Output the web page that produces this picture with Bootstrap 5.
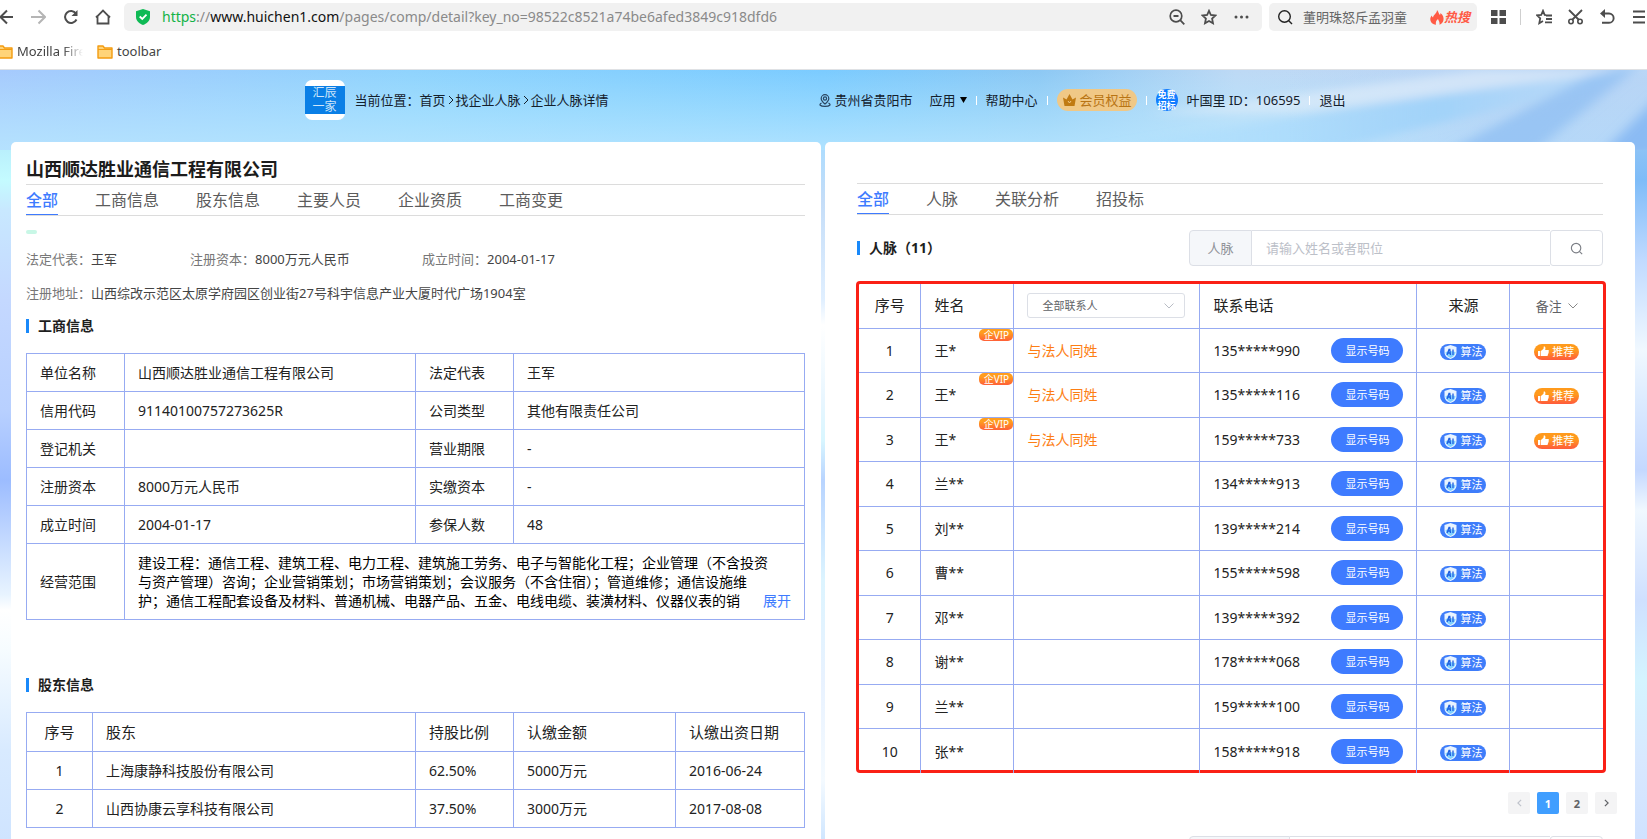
<!DOCTYPE html>
<html lang="zh-CN">
<head>
<meta charset="utf-8">
<meta name="viewport" content="width=device-width, initial-scale=1">
<title>企业人脉详情</title>
<link rel="stylesheet" href="https://cdn.jsdelivr.net/npm/bootstrap@5.3.0/dist/css/bootstrap.min.css">
<style>
:root{--line:#97abf2;--blue:#3e7bff;--bar:#1989fa}
body{font-family:"Noto Sans","Noto Sans CJK SC",sans-serif;font-size:14px;line-height:19px;color:#222;background:#fff}
a{color:inherit;text-decoration:none}
svg{display:block;flex:none}
button{font-family:inherit}
/* browser chrome */
.toolrow{height:34px}
.ico-btn{border:0;background:none;padding:0;color:#4d4d4d}
.addr{height:28px;background:#f1f1f1;border-radius:5px;margin-left:13px;padding:0 13px 0 12px}
.url{font-size:14px;line-height:20px;color:#8a8a8a;white-space:nowrap;overflow:hidden}
.url b{font-weight:400;color:#111}.url i{font-style:normal;color:#12b347}
.find{width:208px;height:28px;background:#f1f1f1;border-radius:5px;margin-left:7px;padding:0 7px 0 8px}
.find input{width:112px;font-size:13px;border:0;background:none;padding:0;color:#555;outline:0}
.find input::placeholder{color:#666;opacity:1}
.hot{font-size:13px;font-weight:700;font-style:italic;color:#ff5a45;white-space:nowrap}
.marks{height:36px;font-size:13px;color:#444;border-bottom:1px solid #dfe1e4}
.fade-text{width:66px;overflow:hidden;white-space:nowrap;-webkit-mask-image:linear-gradient(90deg,#000 70%,transparent)}
/* page */
.site{
 background:
 linear-gradient(180deg,#a8cffd 0,#b6ecfb 70px,#c4fbff 110px,#c8e8ff 140px,#c4d8ff 230px,#b8d0ff 340px,#9cbcff 410px,#e8f4ff 525px,#fff 540px,#f6fcff 580px,#d8eaff 680px,#cfe4ff 770px) left top/411px 100% no-repeat,
 linear-gradient(180deg,#8fc4f5 72px,#7ebcf8 110px,#c0daff 190px,#f0f8ff 280px,#dcebff 330px,#c4d8ff 400px,#f0f8ff 440px,#cfe0ff 530px,#d4f4ff 610px,#d8e8ff 690px,#d0e2ff 770px) right top/400px 100% no-repeat,
 linear-gradient(180deg,#aadcff 72px,#c4ddf8 130px,#e0efff 230px,#fff 255px,#e8f6ff 330px,#d8f6ff 370px,#b8d4ff 410px,#dcf4ff 510px,#e8f2ff 610px,#f4faff 710px,#cfe6ff 770px)}
.sky{position:absolute;left:0;top:0;width:100%;height:80px;z-index:0}
.site-head{height:72px;font-size:13px;color:#14202c;padding:0 0 12px 3px}
.head-in{width:100%;max-width:1041px}
.logo-box{width:40px;height:40px;background:#fff;border-radius:7px;padding:6px 0}
.logo-box span{display:flex;height:28px;background:#0a7fe6;color:#cfe6fa;font-size:12px;line-height:14px;text-align:center;align-items:center;justify-content:center}
.sep{width:1px;height:9px;background:#fff}
.vip-pill{height:22px;border-radius:11px;background:#f0c886;color:#b87414;padding:0 5px 0 6px}
.avatar{width:22px;height:22px;border-radius:50%;background:#127dff;color:#fff;font-size:9px;line-height:11px;font-weight:700;text-align:center}
.panels{padding:0 12px 0 11px;gap:4px}
.panel{width:50%;min-width:0;background:#fff;border-radius:5px 5px 0 0}
.panel-l{padding:15px 16px 0 15px}
.panel-r{padding:41px 32px 0}
.co-name{font-size:18px;line-height:24px;font-weight:700;margin:0 0 3px;color:#1c1c1c}
.tabs{height:32px;border-top:1px solid #dcdcdc;border-bottom:1px solid #dcdcdc;gap:37px;font-size:16px;color:#5c5c5c}
.tabs a{line-height:31px;height:30px;white-space:nowrap}
.tabs a.on{color:var(--blue);border-bottom:1px solid var(--blue);font-weight:500}
.dash{width:11px;height:4px;border-radius:2px;background:#c8f7e6;margin-top:14px}
.facts{font-size:13px;color:#444}
.facts em{font-style:normal;color:#777}
.facts>span:nth-child(1){width:164px}.facts>span:nth-child(2){width:232px}
.sec{font-size:14px;line-height:20px;font-weight:700;margin:0;color:#1e1e1e}
.sec::before{content:"";width:3px;height:14px;background:var(--bar);margin-right:9px}
.grid{border-collapse:collapse;table-layout:fixed;width:100%}
.grid th,.grid td{border:1px solid var(--line);padding:0 13px;font-weight:400;height:38px}
.grid thead th{font-size:15px;height:39px}
.scope{line-height:19px;color:#000;white-space:nowrap;overflow:hidden}
.more{right:0;bottom:0;padding-left:24px;color:var(--blue);background:linear-gradient(90deg,rgba(255,255,255,0),#fff 20px);border:0}
.srch{width:414px;height:36px}
.srch label,.srch input,.srch button{border:1px solid #dcdfe6;font-size:13px;height:36px}
.srch label{width:63px;background:#f5f7fa;color:#909399;border-radius:4px 0 0 4px;line-height:34px;text-align:center}
.srch input{border-left:0;border-right:0;padding:0 14px;min-width:0;outline:0}
.srch input::placeholder{color:#bcc0c8;opacity:1}
.srch button{width:53px;background:#fff;border-radius:3px 4px 4px 3px;color:#7c7f86}
.frame{border:3px solid #fa2016;border-radius:4px;margin:15px -3px 0 -1px}
.people{height:489px;margin-bottom:-3px}
.grid.people th,.grid.people td{height:44px}
.people tr:first-child th{border-top:0}
.people tr>:first-child{border-left:0;text-align:center}
.people tr>:last-child{border-right:0;text-align:center;padding:0}
.people tr>:nth-child(5){text-align:center;padding:0}
.people tbody tr:last-child td{border-bottom:0}
.people td:nth-child(3){color:#fd7e14}
.pick{width:158px;height:25px;border:1px solid #dcdfe6;border-radius:3px;font-size:11px;line-height:14px;color:#606266;padding:0 14px;appearance:none;background:#fff url("data:image/svg+xml,%3Csvg xmlns='http://www.w3.org/2000/svg' viewBox='0 0 10 6'%3E%3Cpath d='M.5.5 5 5 9.500.5' fill='none' stroke='%23b8bcc4'/%3E%3C/svg%3E") no-repeat right 10px center/10px 6px}
.note{border:0;background:none;padding:0;font-size:13px;color:#606266}
.show{width:72px;height:25px;border:0;border-radius:13px;background:var(--blue);color:#fff;font-size:11px;line-height:25px;padding:0}
.tag-ai,.tag-rec{height:16px;border-radius:8px;color:#fff;font-size:11px;line-height:16px;vertical-align:middle}
.tag-ai{width:46px;background:#3e7dfa;gap:3px;padding-left:4px}
.tag-rec{width:45px;background:linear-gradient(180deg,#ff9a1c 40%,#ff5a3c);gap:3px;padding-left:4px}
.tag-vip{right:0;top:0;width:34px;height:12px;border-radius:5px;background:linear-gradient(180deg,#ff9d1e 30%,#ff6038);color:#fff;font-size:10px;line-height:12px;text-align:center}
.pager{gap:7px;margin:19px -14px 0 0}
.pager a{width:22px;height:22px;border-radius:2px;background:#f4f4f5;color:#606266;font-size:11px;font-weight:700}
.pager a.on{background:#409eff;color:#fff}
</style>
</head>
<body class="vh-100 overflow-hidden d-flex flex-column">
<svg width="0" height="0" class="position-absolute" aria-hidden="true">
 <symbol id="shield" viewBox="0 0 12 14"><path d="M6 0 12 2v5c0 4-3 6-6 7C3 13 0 11 0 7V2z" fill="#e9f4ff"/><path d="M6 6l5 1c0 3-2.500 5-5 6-2.500-1-5-3-5-6z" fill="#7fd0ff"/><path d="M2.500 10 4.500 4.500h.8L6 10M8.500 4.500V10M3.400 8h2.200" fill="none" stroke="#1f5fe0" stroke-width="1.300"/></symbol>
 <symbol id="thumb" viewBox="0 0 12 12"><path d="M0 5.500h2.500V11H0zM3.200 5.500 6 3 6.300.6C8 .3 8.500 2 7.800 4.300H11c1 0 1.200 1.200.5 1.700.4.600.3 1.300-.3 1.600.3.600.1 1.200-.4 1.500.2.900-.3 1.900-1.500 1.900H3.200z" fill="#fff"/></symbol>
 <symbol id="folder" viewBox="0 0 16 14"><path d="M1 1h5l1.500 2H15v10H1z" fill="#ffd479" stroke="#f39c12" stroke-width="1.400" stroke-linejoin="round"/><path d="M1 4.500h14" stroke="#f39c12"/></symbol>
 <symbol id="chev" viewBox="0 0 6 10"><path d="M1 1l4 4-4 4" fill="none" stroke="currentColor"/></symbol>
 <symbol id="lens" viewBox="0 0 16 16"><circle cx="7.500" cy="7.500" r="5.800" fill="none" stroke="currentColor" stroke-width="1.400"/><path d="M11.500 11.500 15 15" stroke="currentColor" stroke-width="1.400"/></symbol>
</svg>

<header class="flex-shrink-0 bg-white">
 <div class="toolrow d-flex align-items-center">
  <button class="ico-btn" aria-label="后退"><svg width="13" height="16" viewBox="0 0 13 16"><path d="M13 8H0M7 1.500 0.500 8 7 14.500" fill="none" stroke="currentColor" stroke-width="2"/></svg></button>
  <button class="ico-btn" style="color:#b5b5b5;margin-left:18px" aria-label="前进"><svg width="15" height="16" viewBox="0 0 15 16"><path d="M0 8h14M7.500 1.500 14 8l-6.500 6.500" fill="none" stroke="currentColor" stroke-width="2"/></svg></button>
  <button class="ico-btn" style="margin-left:18px" aria-label="刷新"><svg width="14" height="16" viewBox="0 0 14 16"><path d="M12.500 10.500A6 6 0 1 1 12 4.500" fill="none" stroke="currentColor" stroke-width="2"/><path d="M13.500 1v6h-6z" fill="currentColor"/></svg></button>
  <button class="ico-btn" style="margin-left:17px" aria-label="主页"><svg width="16" height="16" viewBox="0 0 16 16"><path d="M2.500 14.500V7L8 1.500 13.500 7v7.500zM1 8.500 2.500 7M15 8.500 13.500 7" fill="none" stroke="currentColor" stroke-width="1.800"/></svg></button>
  <div class="addr d-flex align-items-center flex-grow-1 overflow-hidden">
   <svg width="14" height="16" viewBox="0 0 14 16"><path d="M7 0 14 2.200V8c0 4-3.500 6.800-7 8C3.500 14.800 0 12 0 8V2.200z" fill="#0fba55"/><path d="M3.700 7.500 6.300 10l4.200-4.300" fill="none" stroke="#fff" stroke-width="1.800"/></svg>
   <div class="url flex-grow-1 ms-2 ps-1"><i>https</i>://<b>www.huichen1.com</b>/pages/comp/detail?key_no=98522c8521a74be6afed3849c918dfd6</div>
   <button class="ico-btn" aria-label="缩放"><svg width="16" height="16" viewBox="0 0 16 16"><circle cx="7" cy="7" r="5.800" fill="none" stroke="currentColor" stroke-width="1.700"/><path d="M4.500 7h5M11.200 11.200 15.300 15.300" stroke="currentColor" stroke-width="1.800"/></svg></button>
   <button class="ico-btn ms-3" aria-label="收藏"><svg width="16" height="16" viewBox="0 0 16 16"><path d="m8 1.800 1.900 4.200 4.600.5-3.400 3.100.9 4.600L8 12l-4 2.200.9-4.600L1.500 6.500 6.100 6z" fill="none" stroke="currentColor" stroke-width="1.800"/></svg></button>
   <button class="ico-btn ms-3" aria-label="更多"><svg width="16" height="16" viewBox="0 0 16 16" fill="currentColor"><circle cx="3" cy="8" r="1.500"/><circle cx="8.500" cy="8" r="1.500"/><circle cx="14" cy="8" r="1.500"/></svg></button>
  </div>
  <div class="find d-flex align-items-center">
   <svg width="16" height="16" color="#222"><use href="#lens"/></svg>
   <input type="text" style="margin-left:10px" aria-label="搜索" placeholder="董明珠怒斥孟羽童">
   <a href="#" class="hot d-flex align-items-center ms-auto"><svg width="14" height="15" viewBox="0 0 14 15"><path d="M7 0c2 2 1.500 4 3 5 .5-.8.500-1.500.4-2C13 5 14 7.500 13.500 10c-.5 2.500-2 4-4 4.800C10 12 8.500 11 8 9c-2 1.500-2.500 3.500-2 5.800C3 14.500.5 12.500.3 9.500.200 7.500 1 6.500 1.800 5.500c.2 1 .5 1.500 1.200 2C3.500 4.500 7 3.500 7 0z" fill="#ff5a45"/></svg>热搜</a>
  </div>
  <button class="ico-btn" style="margin-left:14px" aria-label="应用"><svg width="15" height="14" viewBox="0 0 15 14" fill="currentColor"><path d="M0 0h6.500v6H0zM8.500 0H15v6H8.500zM0 8h6.500v6H0zM8.500 8H15v6H8.500z"/></svg></button>
  <span style="width:1px;height:16px;background:#cfcfcf;margin:0 15px 0 14px"></span>
  <button class="ico-btn" aria-label="收藏夹"><svg width="16" height="16" viewBox="0 0 16 16"><path d="M10 6.200 8.700 6 7 1.800 5.200 6 1 6.300l3.200 3-.9 4.900L7 12M10 6.500h6M10 10h6M9 13.300h7" fill="none" stroke="currentColor" stroke-width="1.800"/></svg></button>
  <button class="ico-btn" style="margin-left:16px" aria-label="截图"><svg width="15" height="16" viewBox="0 0 15 16"><path d="M1 1l10 10M14 1 4 11" stroke="currentColor" stroke-width="1.800"/><circle cx="3" cy="12.500" r="2.200" fill="none" stroke="currentColor" stroke-width="1.600"/><circle cx="12" cy="12.500" r="2.200" fill="none" stroke="currentColor" stroke-width="1.600"/></svg></button>
  <button class="ico-btn" style="margin-left:17px" aria-label="撤销"><svg width="15" height="16" viewBox="0 0 15 16"><path d="M2 4.500h7a4.600 4.600 0 0 1 0 9.300H2" fill="none" stroke="currentColor" stroke-width="1.900"/><path d="M5 0v9L0 4.500z" fill="currentColor"/></svg></button>
  <button class="ico-btn" style="margin-left:18px" aria-label="菜单"><svg width="14" height="14" viewBox="0 0 14 14"><path d="M0 1.500h12M0 7h12M0 12.500h12" stroke="currentColor" stroke-width="1.900"/></svg></button>
 </div>
 <nav class="marks d-flex align-items-center">
  <a href="#" class="d-flex align-items-center"><svg width="13" height="14" viewBox="3 0 13 14"><use href="#folder" width="16" height="14"/></svg><span class="fade-text ms-1">Mozilla Fire</span></a>
  <a href="#" class="d-flex align-items-center" style="margin-left:14px"><svg width="16" height="14"><use href="#folder"/></svg><span class="ms-1">toolbar</span></a>
 </nav>
</header>

<div class="site position-relative flex-grow-1 d-flex flex-column" style="min-height:0">
 <svg class="sky" viewBox="0 0 1647 80" preserveAspectRatio="none" aria-hidden="true">
  <defs>
   <linearGradient id="h"><stop offset="0" stop-color="#a6cafd"/><stop offset=".25" stop-color="#8fd3fd"/><stop offset=".5" stop-color="#7bcbff"/><stop offset=".63" stop-color="#8cc8f4"/><stop offset=".75" stop-color="#bdd9f5"/><stop offset="1" stop-color="#c2d7f4"/></linearGradient>
   <linearGradient id="v" x2="0" y2="1"><stop offset="0" stop-color="#b8ecff" stop-opacity="0"/><stop offset="1" stop-color="#b8e6ff" stop-opacity=".85"/></linearGradient>
   <linearGradient id="s"><stop offset="0" stop-color="#a0d8ff" stop-opacity="0"/><stop offset=".6" stop-color="#98d0fa" stop-opacity=".7"/><stop offset="1" stop-color="#c8e2fa" stop-opacity=".3"/></linearGradient>
   <linearGradient id="e"><stop offset=".78" stop-color="#b4d3f6" stop-opacity="0"/><stop offset=".9" stop-color="#b4d3f6" stop-opacity=".7"/></linearGradient>
   <filter id="b" x="-10%" y="-50%" width="120%" height="200%"><feGaussianBlur stdDeviation="7 4"/></filter>
  </defs>
  <path d="M0 0h1647v80H0z" fill="url(#h)"/><path d="M0 0h1647v80H0z" fill="url(#v)"/><path d="M0 0h1647v80H0z" fill="url(#e)"/>
  <g filter="url(#b)">
   <path d="M1080 80 1640-5h40L1330 80z" fill="url(#s)"/>
   <path d="M1150 44 1480 0h150L1300 42z" fill="#e2effa" opacity=".6"/>
   <path d="M1440 85 1590 5l50-10-110 90z" fill="#86b9f2" opacity=".6"/>
   <path d="M1600 85l60-60v60z" fill="#7fb4f2" opacity=".8"/>
  </g>
 </svg>
 <div class="site-head position-relative d-flex align-items-center justify-content-center flex-shrink-0">
  <div class="head-in d-flex align-items-center text-nowrap">
   <a href="#" class="logo-box"><span>汇辰<br>一家</span></a>
   <nav class="d-flex align-items-center" style="margin-left:10px;gap:2px"><span>当前位置：<a href="#">首页</a></span><svg width="6" height="10"><use href="#chev"/></svg><a href="#">找企业人脉</a><svg width="6" height="10"><use href="#chev"/></svg><a href="#">企业人脉详情</a></nav>
   <nav class="d-flex align-items-center ms-auto" style="gap:9px">
    <a href="#" class="d-flex align-items-center gap-1 me-2"><svg width="12" height="13" viewBox="0 0 12 13"><g fill="none" stroke="#2a4560" stroke-width="1.200"><path d="M6 10C3.500 8 2.200 6.500 2.200 4.500a3.800 3.800 0 0 1 7.600 0C9.800 6.500 8.500 8 6 10z"/><circle cx="6" cy="4.500" r="1.600"/><path d="M2.500 9C-.5 10.500 1 12.400 6 12.400s6.500-1.900 3.500-3.400"/></g></svg>贵州省贵阳市</a>
    <a href="#" class="d-flex align-items-center gap-1">应用<svg width="7" height="6" viewBox="0 0 7 6"><path d="M0 0h7L3.500 6z"/></svg></a>
    <span class="sep"></span><a href="#">帮助中心</a><span class="sep"></span>
    <a href="#" class="vip-pill d-flex align-items-center gap-1"><svg width="13" height="12" viewBox="0 0 13 12"><path d="M0 3.500 3.500 5.500 6.500 0l3 5.500L13 3.500 11.500 12h-10z" fill="#c07a12"/><path d="m5 7 1.500 2L8 7" fill="none" stroke="#f0c886"/></svg>会员权益</a>
    <span class="sep"></span><span class="avatar">免费<br>招标</span><span>叶国里 ID：106595</span><span class="sep"></span><a href="#">退出</a>
   </nav>
  </div>
 </div>

 <main class="panels position-relative d-flex flex-grow-1" style="min-height:0">
  <section class="panel panel-l overflow-hidden">
   <h1 class="co-name">山西顺达胜业通信工程有限公司</h1>
   <nav class="tabs d-flex"><a href="#" class="on">全部</a><a href="#">工商信息</a><a href="#">股东信息</a><a href="#">主要人员</a><a href="#">企业资质</a><a href="#">工商变更</a></nav>
   <div class="dash"></div>
   <div class="facts d-flex mt-3"><span><em>法定代表：</em>王军</span><span><em>注册资本：</em>8000万元人民币</span><span><em>成立时间：</em>2004-01-17</span></div>
   <div class="facts" style="margin-top:15px"><em>注册地址：</em>山西综改示范区太原学府园区创业街27号科宇信息产业大厦时代广场1904室</div>
   <h2 class="sec d-flex align-items-center" style="margin:13px 0 17px">工商信息</h2>
   <table class="grid">
    <colgroup><col style="width:98px"><col><col style="width:98px"><col></colgroup>
    <tbody>
    <tr><th>单位名称</th><td>山西顺达胜业通信工程有限公司</td><th>法定代表</th><td>王军</td></tr>
    <tr><th>信用代码</th><td>91140100757273625R</td><th>公司类型</th><td>其他有限责任公司</td></tr>
    <tr><th>登记机关</th><td></td><th>营业期限</th><td>-</td></tr>
    <tr><th>注册资本</th><td>8000万元人民币</td><th>实缴资本</th><td>-</td></tr>
    <tr><th>成立时间</th><td>2004-01-17</td><th>参保人数</th><td>48</td></tr>
    <tr style="height:76px"><th>经营范围</th><td colspan="3"><div class="scope position-relative">建设工程：通信工程、建筑工程、电力工程、建筑施工劳务、电子与智能化工程；企业管理（不含投资<br>与资产管理）咨询；企业营销策划；市场营销策划；会议服务（不含住宿）；管道维修；通信设施维<br>护；通信工程配套设备及材料、普通机械、电器产品、五金、电线电缆、装潢材料、仪器仪表的销<a href="#" class="more position-absolute">展开</a></div></td></tr>
    </tbody>
   </table>
   <h2 class="sec d-flex align-items-center" style="margin:55px 0 17px">股东信息</h2>
   <table class="grid">
    <colgroup><col style="width:66px"><col><col style="width:98px"><col style="width:162px"><col style="width:129px"></colgroup>
    <thead><tr><th class="text-center">序号</th><th>股东</th><th>持股比例</th><th>认缴金额</th><th>认缴出资日期</th></tr></thead>
    <tbody>
    <tr><td class="text-center">1</td><td>上海康静科技股份有限公司</td><td>62.50%</td><td>5000万元</td><td>2016-06-24</td></tr>
    <tr><td class="text-center">2</td><td>山西协康云享科技有限公司</td><td>37.50%</td><td>3000万元</td><td>2017-08-08</td></tr>
    </tbody>
   </table>
  </section>

  <section class="panel panel-r overflow-hidden">
   <nav class="tabs d-flex"><a href="#" class="on">全部</a><a href="#">人脉</a><a href="#">关联分析</a><a href="#">招投标</a></nav>
   <div class="d-flex justify-content-between align-items-center" style="margin-top:15px">
    <h2 class="sec d-flex align-items-center">人脉（11）</h2>
    <form class="srch d-flex"><label for="kw">人脉</label><input id="kw" class="flex-grow-1" type="text" placeholder="请输入姓名或者职位"><button type="button" class="d-flex align-items-center justify-content-center" aria-label="搜索"><svg width="13" height="13"><use href="#lens"/></svg></button></form>
   </div>
   <div class="frame">
    <table class="grid people">
     <colgroup><col style="width:62px"><col style="width:93px"><col style="width:186px"><col style="width:217px"><col style="width:93px"><col></colgroup>
     <thead><tr><th>序号</th><th>姓名</th><th><select class="pick d-block" aria-label="联系人筛选"><option>全部联系人</option></select></th><th>联系电话</th><th>来源</th><th><button class="note d-inline-flex align-items-center" style="gap:6px">备注<svg width="10" height="6" viewBox="0 0 10 6"><path d="M.5.5 5 5 9.500.5" fill="none" stroke="#888"/></svg></button></th></tr></thead>
     <tbody>
     <tr><td>1</td><td class="position-relative">王*<span class="tag-vip position-absolute">企VIP</span></td><td>与法人同姓</td><td><div class="d-flex justify-content-between align-items-center">135*****990<button class="show">显示号码</button></div></td><td><span class="tag-ai d-inline-flex align-items-center"><svg width="13" height="14"><use href="#shield"/></svg>算法</span></td><td><span class="tag-rec d-inline-flex align-items-center"><svg width="11" height="11"><use href="#thumb"/></svg>推荐</span></td></tr>
     <tr><td>2</td><td class="position-relative">王*<span class="tag-vip position-absolute">企VIP</span></td><td>与法人同姓</td><td><div class="d-flex justify-content-between align-items-center">135*****116<button class="show">显示号码</button></div></td><td><span class="tag-ai d-inline-flex align-items-center"><svg width="13" height="14"><use href="#shield"/></svg>算法</span></td><td><span class="tag-rec d-inline-flex align-items-center"><svg width="11" height="11"><use href="#thumb"/></svg>推荐</span></td></tr>
     <tr><td>3</td><td class="position-relative">王*<span class="tag-vip position-absolute">企VIP</span></td><td>与法人同姓</td><td><div class="d-flex justify-content-between align-items-center">159*****733<button class="show">显示号码</button></div></td><td><span class="tag-ai d-inline-flex align-items-center"><svg width="13" height="14"><use href="#shield"/></svg>算法</span></td><td><span class="tag-rec d-inline-flex align-items-center"><svg width="11" height="11"><use href="#thumb"/></svg>推荐</span></td></tr>
     <tr><td>4</td><td>兰**</td><td></td><td><div class="d-flex justify-content-between align-items-center">134*****913<button class="show">显示号码</button></div></td><td><span class="tag-ai d-inline-flex align-items-center"><svg width="13" height="14"><use href="#shield"/></svg>算法</span></td><td></td></tr>
     <tr><td>5</td><td>刘**</td><td></td><td><div class="d-flex justify-content-between align-items-center">139*****214<button class="show">显示号码</button></div></td><td><span class="tag-ai d-inline-flex align-items-center"><svg width="13" height="14"><use href="#shield"/></svg>算法</span></td><td></td></tr>
     <tr><td>6</td><td>曹**</td><td></td><td><div class="d-flex justify-content-between align-items-center">155*****598<button class="show">显示号码</button></div></td><td><span class="tag-ai d-inline-flex align-items-center"><svg width="13" height="14"><use href="#shield"/></svg>算法</span></td><td></td></tr>
     <tr><td>7</td><td>邓**</td><td></td><td><div class="d-flex justify-content-between align-items-center">139*****392<button class="show">显示号码</button></div></td><td><span class="tag-ai d-inline-flex align-items-center"><svg width="13" height="14"><use href="#shield"/></svg>算法</span></td><td></td></tr>
     <tr><td>8</td><td>谢**</td><td></td><td><div class="d-flex justify-content-between align-items-center">178*****068<button class="show">显示号码</button></div></td><td><span class="tag-ai d-inline-flex align-items-center"><svg width="13" height="14"><use href="#shield"/></svg>算法</span></td><td></td></tr>
     <tr><td>9</td><td>兰**</td><td></td><td><div class="d-flex justify-content-between align-items-center">159*****100<button class="show">显示号码</button></div></td><td><span class="tag-ai d-inline-flex align-items-center"><svg width="13" height="14"><use href="#shield"/></svg>算法</span></td><td></td></tr>
     <tr><td>10</td><td>张**</td><td></td><td><div class="d-flex justify-content-between align-items-center">158*****918<button class="show">显示号码</button></div></td><td><span class="tag-ai d-inline-flex align-items-center"><svg width="13" height="14"><use href="#shield"/></svg>算法</span></td><td></td></tr>
     </tbody>
    </table>
   </div>
   <nav class="pager d-flex justify-content-end" aria-label="分页">
    <a href="#" class="d-flex align-items-center justify-content-center" aria-label="上一页"><svg width="5" height="8" viewBox="0 0 6 10"><path d="M5 1 1 5l4 4" fill="none" stroke="#c0c4cc" stroke-width="1.500"/></svg></a>
    <a href="#" class="on d-flex align-items-center justify-content-center">1</a>
    <a href="#" class="d-flex align-items-center justify-content-center">2</a>
    <a href="#" class="d-flex align-items-center justify-content-center" aria-label="下一页"><svg width="5" height="8" viewBox="0 0 6 10"><path d="M1 1l4 4-4 4" fill="none" stroke="#606266" stroke-width="1.500"/></svg></a>
   </nav>
   <form class="srch d-flex ms-auto" style="margin-top:22px"><label for="kw2" style="width:101px"></label><input id="kw2" class="flex-grow-1" type="text" aria-label="关联搜索"><button type="button" aria-label="查询"></button></form>
  </section>
 </main>
</div>
<script src="https://cdn.jsdelivr.net/npm/bootstrap@5.3.0/dist/js/bootstrap.bundle.min.js"></script>
</body>
</html>
